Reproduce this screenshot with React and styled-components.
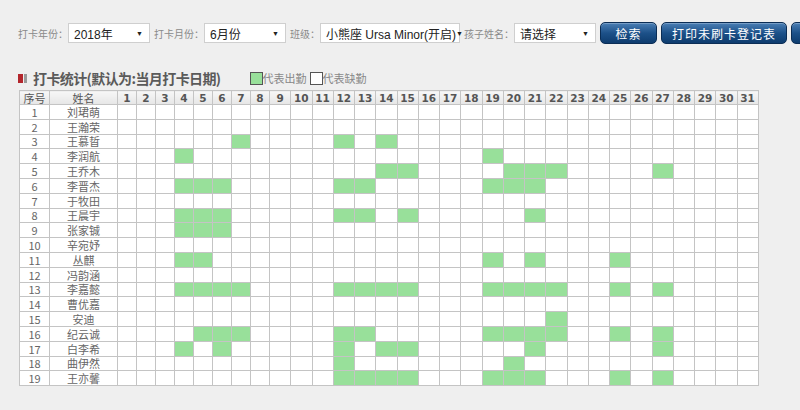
import React from 'react'
import styled, { createGlobalStyle } from 'styled-components'

const GlobalStyle = createGlobalStyle`
  html, body {
    margin: 0;
    padding: 0;
    background: #efefef;
    overflow: hidden;
  }
  body {
    font-family: "Liberation Sans", "Noto Sans CJK SC", sans-serif;
    width: 800px;
    height: 410px;
  }
`

const names = [
  '刘珺萌', '王瀚荣', '王慕晢', '李润航', '王乔木', '李晋杰', '于牧田', '王晨宇', '张家铖', '辛宛妤',
  '丛麒', '冯韵涵', '李嘉懿', '曹优嘉', '安迪', '纪云诚', '白李希', '曲伊然', '王亦馨',
]

// days attended, per row
const attended = [
  [],
  [],
  [7, 12, 14],
  [4, 19],
  [14, 15, 20, 21, 22, 27],
  [4, 5, 6, 12, 13, 19, 20, 21],
  [],
  [4, 5, 6, 12, 13, 15, 21],
  [4, 5, 6],
  [],
  [4, 5, 19, 21, 25],
  [],
  [4, 5, 6, 7, 12, 13, 14, 15, 19, 20, 21, 22, 25, 27],
  [],
  [22],
  [5, 6, 7, 12, 13, 19, 20, 21, 22, 25, 27],
  [4, 6, 12, 14, 15, 21, 27],
  [12, 20],
  [12, 13, 14, 15, 19, 20, 21, 25, 27],
]

const days = Array.from({ length: 31 }, (_, i) => i + 1)

const Page = styled.div`
  padding: 22px 0 0 18px;
`

const Toolbar = styled.div`
  display: flex;
  align-items: center;
  white-space: nowrap;
  height: 22px;
`

const Label = styled.span`
  flex-shrink: 0;
  font-size: 10px;
  color: #8a8a8a;
  margin-right: 0;
  margin-left: ${p => p.$first ? 0 : 4}px;
`

const Select = styled.div`
  box-sizing: border-box;
  flex-shrink: 0;
  width: ${p => p.$w}px;
  height: 20px;
  background: #fff;
  border: 1px solid #cfcfcf;
  display: flex;
  align-items: center;
  justify-content: space-between;
  padding: 0 6px 0 5px;
  font-size: 12px;
  color: #222;
`

const Arrow = styled.span`
  font-size: 7px;
  color: #222;
`

const Button = styled.div`
  box-sizing: border-box;
  flex-shrink: 0;
  width: ${p => p.$w}px;
  height: 22px;
  margin-left: 4px;
  border-radius: 5px;
  border: 1px solid #0b2d55;
  background: linear-gradient(#4a7fb5, #1d5189 50%, #0e3c6e);
  color: #fff;
  font-family: "Noto Sans CJK SC", sans-serif;
  font-size: 12px;
  letter-spacing: 1px;
  display: flex;
  align-items: center;
  justify-content: center;
  box-shadow: inset 0 1px 0 rgba(255,255,255,0.25);
`

const TitleRow = styled.div`
  display: flex;
  align-items: center;
  margin-top: 26px;
  height: 16px;
`

const TitleIcon = styled.span`
  display: inline-flex;
  gap: 1px;
  margin-right: 6px;
  span:first-child { width: 5px; height: 9px; background: #b3262c; }
  span:last-child { width: 3px; height: 9px; background: #9a9a9a; }
`

const Title = styled.h2`
  margin: 0;
  font-family: "Noto Sans CJK SC", sans-serif;
  font-size: 14px;
  font-weight: bold;
  letter-spacing: -0.6px;
  color: #5a5a5a;
`

const Legend = styled.div`
  display: flex;
  align-items: center;
  margin-left: 29px;
  font-family: "Noto Sans CJK SC", sans-serif;
  font-size: 11px;
  color: #888;
`

const Swatch = styled.span`
  box-sizing: border-box;
  width: 13px;
  height: 13px;
  border: 1px solid #555;
  background: ${p => p.$on ? '#98e09a' : '#fff'};
  margin-left: ${p => p.$gap || 0}px;
`

const Table = styled.table`
  margin-top: 4px;
  margin-left: 1px;
  border-collapse: collapse;
  table-layout: fixed;
  width: 739px;
  background: #fff;
  font-size: 12px;
  color: #555;
`

const Th = styled.th`
  height: 13px;
  padding: 0;
  border: 1px solid #c4c4c4;
  background: linear-gradient(#f7f7f7, #e6e6e6);
  font-weight: ${p => p.$num ? 'bold' : 'normal'};
  font-family: ${p => p.$num ? '"DejaVu Sans", sans-serif' : '"Noto Sans CJK SC", sans-serif'};
  font-size: ${p => p.$num ? 10.5 : 11}px;
  color: #555;
  line-height: 12px;
`

const Td = styled.td`
  height: 13.8px;
  padding: 0;
  border: 1px solid #c4c4c4;
  text-align: center;
  line-height: 12px;
  font-family: "Noto Sans CJK SC", sans-serif;
  font-size: 11px;
  color: #666;
  background: ${p => p.$on ? '#98e09a' : '#fff'};
`

export default function App() {
  return (
    <>
      <GlobalStyle />
      <Page>
        <Toolbar>
          <Label $first>打卡年份：</Label>
          <Select $w={82}>2018年<Arrow>▼</Arrow></Select>
          <Label>打卡月份：</Label>
          <Select $w={82}>6月份<Arrow>▼</Arrow></Select>
          <Label>班级：</Label>
          <Select $w={140}>小熊座 Ursa Minor(开启)<Arrow>▼</Arrow></Select>
          <Label>孩子姓名：</Label>
          <Select $w={82}>请选择<Arrow>▼</Arrow></Select>
          <Button $w={57}>检索</Button>
          <Button $w={126}>打印未刷卡登记表</Button>
          <Button $w={100}>导出考勤表</Button>
        </Toolbar>

        <TitleRow>
          <TitleIcon><span /><span /></TitleIcon>
          <Title>打卡统计(默认为:当月打卡日期)</Title>
          <Legend>
            <Swatch $on />代表出勤
            <Swatch $gap={3} />代表缺勤
          </Legend>
        </TitleRow>

        <Table>
          <colgroup>
            <col style={{ width: 30 }} />
            <col style={{ width: 68 }} />
            {days.map(d => <col key={d} style={{ width: d <= 8 ? 19 : 21.26 }} />)}
          </colgroup>
          <thead>
            <tr>
              <Th>序号</Th>
              <Th>姓名</Th>
              {days.map(d => <Th key={d} $num>{d}</Th>)}
            </tr>
          </thead>
          <tbody>
            {names.map((name, i) => (
              <tr key={name}>
                <Td>{i + 1}</Td>
                <Td>{name}</Td>
                {days.map(d => <Td key={d} $on={attended[i].includes(d)} />)}
              </tr>
            ))}
          </tbody>
        </Table>
      </Page>
    </>
  )
}
